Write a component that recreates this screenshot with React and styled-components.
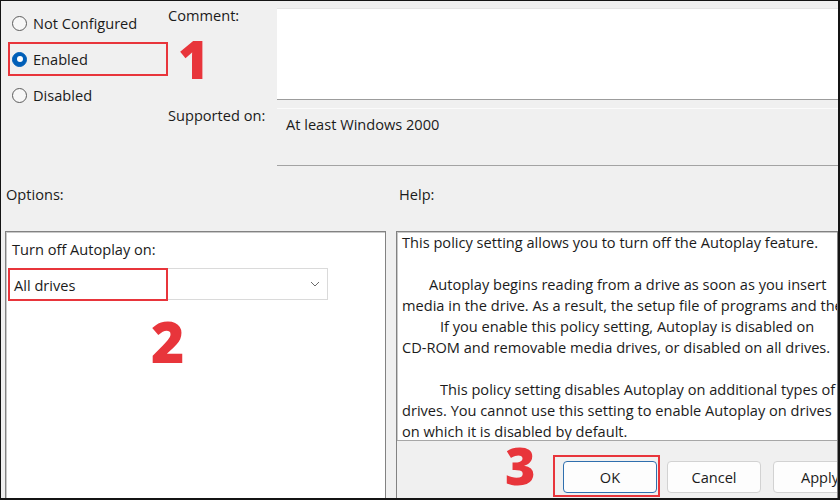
import React from 'react'
import styled, { createGlobalStyle } from 'styled-components'

const GlobalStyle = createGlobalStyle`
  html, body {
    margin: 0;
    padding: 0;
    background: #f0f0f0;
  }
`

const ui = `"Open Sans", "Noto Sans", "Liberation Sans", sans-serif`
const red = '#e8353b'

// frame
const Frame = styled.div`
  width: 840px;
  height: 500px;
  box-sizing: border-box;
  border-style: solid;
  border-color: #141414;
  border-width: 1px 2px 2px 1px;
  background: #f0f0f0;
  display: flex;
  flex-direction: column;
  overflow: hidden;
  font-family: ${ui};
  font-size: 14.6px;
  color: #1b1b1b;
`

// top: state radios + comment / supported
const Top = styled.div`
  display: flex;
  height: 165px;
  flex: none;
`

const RadioColumn = styled.div`
  width: 167px;
  flex: none;
  box-sizing: border-box;
  padding: 5px 0 0 7px;
  display: flex;
  flex-direction: column;
  gap: 2px;
`

const RadioLine = styled.div`
  display: flex;
  align-items: center;
  gap: 10px;
  height: 34px;
`

const RadioBox = styled.label`
  display: flex;
  align-items: center;
  gap: 6px;
  width: 160px;
  height: 34px;
  flex: none;
  box-sizing: border-box;
  padding-left: 2px;
  border: 2px solid ${props => props.$marked ? red : 'transparent'};
`

const Circle = styled.span`
  width: 15px;
  height: 15px;
  box-sizing: border-box;
  border-radius: 50%;
  flex: none;
  display: flex;
  align-items: center;
  justify-content: center;
  border: 1px solid ${props => props.$on ? '#005fb8' : '#5c5c5c'};
  background: ${props => props.$on ? '#005fb8' : '#f7f7f7'};

  &::after {
    content: '';
    display: ${props => props.$on ? 'block' : 'none'};
    width: 6px;
    height: 6px;
    border-radius: 50%;
    background: #fff;
  }
`

const Numeral = styled.div`
  font-family: "Open Sans", "Noto Sans", sans-serif;
  font-weight: 800;
  color: ${red};
  font-size: ${props => props.$size}px;
  line-height: 0.8;
  flex: none;
  width: ${props => props.$width ? props.$width + 'px' : 'auto'};
  margin: ${props => props.$margin || '0'};
`

const Fields = styled.div`
  flex: 1;
  display: grid;
  grid-template-columns: 109px 1fr;
  grid-template-rows: 92px 58px;
  row-gap: 8px;
  padding-top: 7px;
`

const FieldLabel = styled.div`
  line-height: 16px;
  margin-top: -1px;
`

const CommentBox = styled.div`
  background: #fff;
  border-top: 1px solid #e4e4e4;
  border-bottom: 1px solid #9c9c9c;
  box-sizing: border-box;
`

const SupportBox = styled.div`
  background: #f0f0f0;
  border-top: 1px solid #fbfbfb;
  border-bottom: 1px solid #a3a3a3;
  box-sizing: border-box;
  padding: 7px 9px;
  line-height: 16px;
`

// section captions
const CaptionRow = styled.div`
  display: grid;
  grid-template-columns: 393px 1fr;
  height: 65px;
  flex: none;
  box-sizing: border-box;
  padding: 20px 0 0 5px;
  line-height: 16px;
`

// panels
const Panels = styled.div`
  flex: 1;
  min-height: 0;
  display: flex;
  gap: 10px;
  padding-left: 4px;
`

const Panel = styled.div`
  background: #fff;
  border: 1px solid #828282;
  border-bottom: none;
  box-shadow: inset 1px 1px 0 #c9c9c9;
  width: ${props => props.$width ? props.$width + 'px' : 'auto'};
  flex: ${props => props.$width ? 'none' : '1'};
  box-sizing: border-box;
  display: flex;
  flex-direction: column;
  min-width: 0;
`

const OptionsBody = styled.div`
  padding: 9px 0 0 6px;
  line-height: 16px;
`

const Select = styled.div`
  margin: 11px 0 0 -4px;
  width: 320px;
  height: 32px;
  box-sizing: border-box;
  border: 1px solid #dadada;
  background: #fff;
  display: flex;
  align-items: center;
`

const SelectValue = styled.div`
  width: 160px;
  height: 33px;
  margin: -1px 0 0 -1px;
  align-self: flex-start;
  box-sizing: border-box;
  border: 2px solid ${red};
  padding-left: 4px;
  display: flex;
  align-items: center;
`

const Chevron = styled.svg`
  margin-left: auto;
  margin-right: 7px;
`

const HelpText = styled.div`
  height: 209px;
  flex: none;
  box-sizing: border-box;
  border-bottom: 1px solid #a7a7a7;
  padding-left: 5px;
  line-height: 21px;
  white-space: nowrap;
  overflow: hidden;
`

const HelpLine = styled.div`
  height: 21px;
  padding-left: ${props => props.$indent || 0}px;
`

const ButtonBar = styled.div`
  flex: 1;
  background: #f0f0f0;
  display: flex;
  align-items: flex-start;
  padding: 14px 0 0 108px;
  white-space: nowrap;
  overflow: hidden;
`

const Mark = styled.div`
  border: 2px solid ${red};
  padding: 4px 1px 2px 8px;
  margin-right: 7px;
  flex: none;
`

const Button = styled.button`
  width: 94px;
  height: 32px;
  flex: none;
  box-sizing: border-box;
  border-radius: 4px;
  border: 1px solid ${props => props.$primary ? '#2f6fae' : '#d2d2d2'};
  background: #fdfdfd;
  font-family: ${ui};
  font-size: 14.6px;
  color: #1b1b1b;
  margin: ${props => props.$top ? '6px 12px 0 0' : '0'};
  padding: 0;
`

const states = ['Not Configured', 'Enabled', 'Disabled']

const help = [
  { t: 'This policy setting allows you to turn off the Autoplay feature.' },
  { t: '' },
  { t: 'Autoplay begins reading from a drive as soon as you insert', i: 27 },
  { t: 'media in the drive. As a result, the setup file of programs and the' },
  { t: 'If you enable this policy setting, Autoplay is disabled on', i: 38 },
  { t: 'CD-ROM and removable media drives, or disabled on all drives.' },
  { t: '' },
  { t: 'This policy setting disables Autoplay on additional types of', i: 38 },
  { t: 'drives. You cannot use this setting to enable Autoplay on drives' },
  { t: 'on which it is disabled by default.' },
]

export default function App() {
  return (
    <>
      <GlobalStyle />
      <Frame>
        <Top>
          <RadioColumn>
            {states.map(s => (
              <RadioLine key={s}>
                <RadioBox $marked={s === 'Enabled'}>
                  <Circle $on={s === 'Enabled'} />
                  {s}
                </RadioBox>
                {s === 'Enabled' && <Numeral $size={53}>1</Numeral>}
              </RadioLine>
            ))}
          </RadioColumn>
          <Fields>
            <FieldLabel>Comment:</FieldLabel>
            <CommentBox />
            <FieldLabel>Supported on:</FieldLabel>
            <SupportBox>At least Windows 2000</SupportBox>
          </Fields>
        </Top>

        <CaptionRow>
          <div>Options:</div>
          <div>Help:</div>
        </CaptionRow>

        <Panels>
          <Panel $width={381}>
            <OptionsBody>
              Turn off Autoplay on:
              <Select>
                <SelectValue>All drives</SelectValue>
                <Chevron width="10" height="6" viewBox="0 0 10 6">
                  <path d="M1 1 L5 5 L9 1" fill="none" stroke="#6b6b6b" strokeWidth="1" />
                </Chevron>
              </Select>
              <Numeral $size={57} $margin="19px 0 0 139px">2</Numeral>
            </OptionsBody>
          </Panel>
          <Panel>
            <HelpText>
              {help.map((l, i) => (
                <HelpLine key={i} $indent={l.i}>{l.t}</HelpLine>
              ))}
            </HelpText>
            <ButtonBar>
              <Numeral $size={52} $width={48} $margin="-11px 0 0 0">3</Numeral>
              <Mark>
                <Button $primary>OK</Button>
              </Mark>
              <Button $top>Cancel</Button>
              <Button $top>Apply</Button>
            </ButtonBar>
          </Panel>
        </Panels>
      </Frame>
    </>
  )
}
